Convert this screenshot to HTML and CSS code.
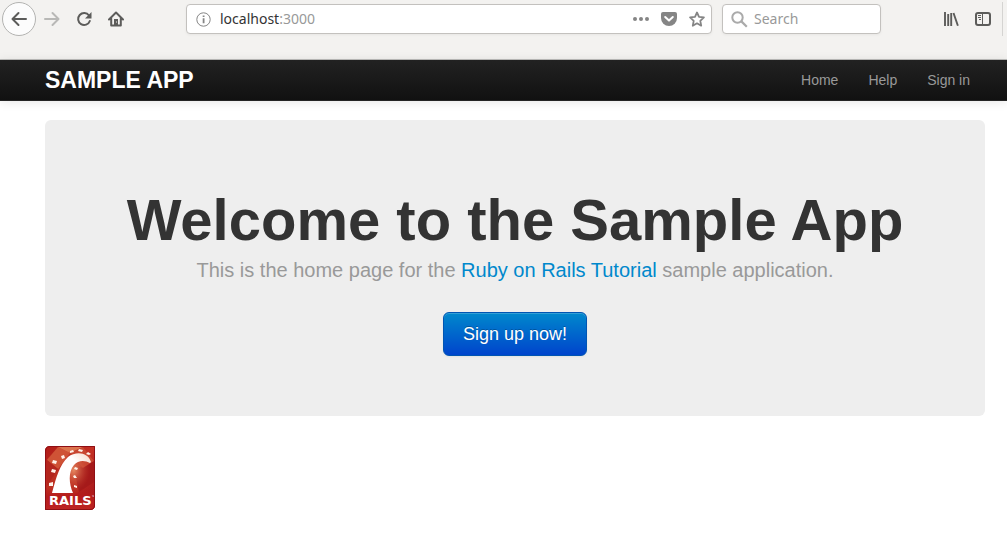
FILE: index.html
```html
<!DOCTYPE html>
<html lang="en">
<head>
<meta charset="utf-8">
<title>Sample App</title>
<link rel="stylesheet" href="styles.css">
</head>
<body>
<div class="toolbar">
  <div class="tools">
    <button class="tool back" aria-label="Back"><svg width="16" height="16" viewBox="0 0 16 16"><path d="M15 8H1.8M7.500 2L1.500 8l6 6" class="line"/></svg></button>
    <button class="tool forward" aria-label="Forward"><svg width="16" height="16" viewBox="0 0 16 16"><path d="M1 8h13.200M8.500 2l6 6-6 6" class="line"/></svg></button>
    <button class="tool" aria-label="Reload"><svg width="16" height="16" viewBox="0 0 16 16"><path d="M13 4.500A6 6 0 1 0 13.800 10" class="line"/><path d="M15.500 1v6.500H9z" fill="currentColor"/></svg></button>
    <button class="tool" aria-label="Home"><svg width="16" height="16" viewBox="0 0 16 16"><path d="M1 8.500l7-7 7 7M3.200 7.500v7h9.600v-7" class="line"/><path d="M6 8h4v6H6z" fill="currentColor"/><path d="M8 10.500h1v1H8z" fill="#f3f2f0"/></svg></button>
  </div>
  <div class="address field">
    <svg width="15" height="15" viewBox="0 0 15 15"><circle cx="7.500" cy="7.500" r="6.700" fill="none" stroke="#858585"/><path d="M6.700 3.400h1.800v1.700H6.700zM6.700 6.300h1.800v5H6.700z" fill="#858585"/></svg>
    <a class="url" href="#">localhost<span class="port">:3000</span></a>
    <button class="field-button" aria-label="Page actions"><svg width="16" height="16" viewBox="0 0 16 16" fill="currentColor"><circle cx="2" cy="8" r="2"/><circle cx="8" cy="8" r="2"/><circle cx="14" cy="8" r="2"/></svg></button>
    <button class="field-button" aria-label="Save to Pocket"><svg width="16" height="16" viewBox="0 0 16 16"><path d="M2 1h12q2 0 2 2v4a8 8 0 0 1-16 0V3q0-2 2-2z" fill="currentColor"/><path d="M4.200 6L8 9.600 11.800 6" fill="none" stroke="#fff" stroke-width="2" stroke-linecap="round" stroke-linejoin="round"/></svg></button>
    <button class="field-button" aria-label="Bookmark"><svg width="16" height="16" viewBox="0 0 16 16"><path d="M8 1.500l2 4.300 4.900.6-3.600 3.400.9 4.900L8 12.300l-4.200 2.400.9-4.900L1.100 6.400 6 5.800z" fill="none" stroke="currentColor" stroke-width="1.800" stroke-linejoin="round"/></svg></button>
  </div>
  <label class="search field">
    <svg width="17" height="17" viewBox="0 0 17 17"><circle cx="6.500" cy="6.500" r="5.200" fill="none" stroke="#aaa" stroke-width="2"/><path d="M10.400 10.400l5.400 5.400" stroke="#aaa" stroke-width="2.200"/></svg>
    <input class="search-input" type="text" placeholder="Search" aria-label="Search">
  </label>
  <div class="tools tools-end">
    <button class="tool" aria-label="Library"><svg width="16" height="16" viewBox="0 0 16 16"><path d="M2 1v14M5.200 3v12M8.200 2v13M10.500 2l4.400 12.700" fill="none" stroke="currentColor" stroke-width="1.900"/></svg></button>
    <button class="tool" aria-label="Sidebars"><svg width="16" height="16" viewBox="0 0 16 16" fill="none" stroke="currentColor"><rect x="1" y="2" width="14" height="12" rx="2" stroke-width="2"/><path d="M7.500 2v12M3 4.500h3M3 6.500h3M4 8.500h2"/></svg></button>
    <span class="divider"></span>
  </div>
</div>
<header class="navbar">
  <div class="container navbar-inner">
    <a class="brand" href="#">SAMPLE APP</a>
    <nav class="nav"><a href="#">Home</a><a href="#">Help</a><a href="#">Sign in</a></nav>
  </div>
</header>
<main class="container">
  <section class="hero">
    <h1>Welcome to the Sample App</h1>
    <h2>This is the home page for the <a href="#">Ruby on Rails Tutorial</a> sample application.</h2>
    <button class="signup">Sign up now!</button>
  </section>
  <a class="rails" href="#" aria-label="Rails">
    <svg width="50" height="64" viewBox="0 0 50 64">
      <defs>
        <linearGradient id="red" x2="1" y2="1"><stop offset="0" stop-color="#b01c18"/><stop offset=".5" stop-color="#c43024"/><stop offset="1" stop-color="#9c1018"/></linearGradient>
        <radialGradient id="glow"><stop offset="0" stop-color="#e68a62"/><stop offset="1" stop-color="#c43a28" stop-opacity="0"/></radialGradient>
        <linearGradient id="track" x1="1" x2="0" y2="1"><stop offset="0" stop-color="#f6d6c4"/><stop offset=".3" stop-color="#fff"/></linearGradient>
        <linearGradient id="base" x2="0" y2="1"><stop offset="0" stop-color="#b01a1a" stop-opacity="0"/><stop offset=".4" stop-color="#b51c1c"/><stop offset="1" stop-color="#bd2422"/></linearGradient>
      </defs>
      <path d="M5 0h45v59q0 5-5 5H0V5q0-5 5-5z" fill="url(#red)"/>
      <path d="M2 13L13 1h25l11 14v20L28 50 2 44z" fill="#bd3022"/>
      <path d="M13 1L2 14l11 9L25 7z" fill="#cf5336"/>
      <path d="M13 1l12 6L38 1z" fill="#dc744e"/>
      <path d="M2 14l11 9L2 40z" fill="#b3261e"/>
      <path d="M38 1l11 14-11 7-13-15z" fill="#c84630"/>
      <path d="M28 18l10 4 11-7v21L34 46z" fill="#a51a1a"/>
      <ellipse cx="29" cy="24" rx="16" ry="21" fill="url(#glow)"/>
      <path d="M0 42h50v17q0 5-5 5H0z" fill="url(#base)"/>
      <path d="M7 47C11 32 15 18 23 11c8-6 20-5 23 5l-1 1c-5-3-12-3-16 2-6 7-5 19-1 28z" fill="url(#track)"/>
      <g fill="#fff1e8"><path d="M16 10l3-1 1 3-3 1zM8 14l4 1-1 3-4-1zM7 23l4 1-1 3-4-1zM4 37l4-1v4l-4 0zM25 5l3-1 1 2-4 1zM34 3l4 1-1 2-4-1zM43 6l3 2-2 1-3-1zM35 12l2 1-1 1-2-1zM30 21l3 1-1 2-3-1zM28 30l2-1 2 3-3 0zM29 39l3 1v2l-3-1z"/></g>
      <text x="4" y="59" class="rails-name">RAILS<tspan class="trade" dy="-7">™</tspan></text>
      <path d="M5 .5h44.500V59q0 4.500-4.500 4.500H.5V5Q.5.5 5 .5z" fill="none" stroke="#8f0f14"/>
    </svg>
  </a>
</main>
</body>
</html>
```
FILE: styles.css
```css
* { box-sizing: border-box; }
body {
  margin: 0;
  background: #fff;
  color: #333;
  font-family: "Liberation Sans", Arial, sans-serif;
  font-size: 14px;
  line-height: 20px;
}
a { color: #08c; text-decoration: none; }
button { font: inherit; cursor: pointer; }
svg { display: block; flex: none; }

.toolbar {
  display: flex;
  align-items: flex-start;
  height: 60px;
  padding: 2px 4px 0 2px;
  background: #f3f2f0;
  border-bottom: 1px solid #bdbdbb;
}
.tools { display: flex; align-items: center; height: 34px; flex: none; }
.tool {
  display: flex;
  align-items: center;
  justify-content: center;
  width: 32px;
  height: 34px;
  padding: 0;
  border: 0;
  background: none;
  color: #5c5c5a;
}
.line { fill: none; stroke: currentColor; stroke-width: 2; stroke-linecap: round; stroke-linejoin: round; }
.back { width: 34px; border: 1px solid #b3b3b1; border-radius: 50%; background: #fcfcfc; }
.forward { color: #b8b8b6; }
.field {
  display: flex;
  align-items: center;
  height: 30px;
  margin-top: 2px;
  background: #fff;
  border: 1px solid #c3c1be;
  border-radius: 4px;
  box-shadow: 0 1px 3px rgba(0, 0, 0, .05);
  font-family: "Noto Sans", sans-serif;
}
.address { flex: 1; margin-left: 54px; padding: 0 6px 0 9px; gap: 12px; }
.url { flex: 1; margin-left: -3px; color: #333; }
.port { color: #999; }
.field-button { padding: 0; border: 0; background: none; color: #858585; }
.search { width: 159px; margin-left: 10px; padding: 0 8px; gap: 6px; }
.search-input { width: 100%; min-width: 0; padding: 0; border: 0; outline: 0; background: none; font: inherit; color: #333; }
.search-input::placeholder { color: #999; opacity: 1; }
.tools-end { margin-left: 54px; }
.divider { width: 1px; height: 34px; margin-left: 3px; background: #d5d4d2; }

.container { max-width: 1007px; margin: 0 auto; padding: 0 22px 0 45px; }
.navbar {
  background: linear-gradient(#222, #111);
  border-bottom: 1px solid #252525;
  box-shadow: 0 1px 10px rgba(0, 0, 0, .1);
}
.navbar-inner { display: flex; align-items: center; justify-content: space-between; height: 40px; }
.brand { color: #fff; font-size: 23px; font-weight: bold; }
.nav { display: flex; gap: 30px; padding-right: 15px; }
.nav a { color: #999; }

.hero {
  margin: 19px 0 30px;
  padding: 68px 20px 60px;
  background: #eee;
  border-radius: 6px;
  text-align: center;
}
.hero h1 { margin: 0; font-size: 58px; line-height: 64px; }
.hero h2 { margin: 0 0 24px; color: #999; font-size: 20px; font-weight: normal; line-height: 36px; }
.signup {
  display: block;
  height: 44px;
  margin: 0 auto;
  padding: 0 19px;
  border: 1px solid #0055b3;
  border-radius: 6px;
  background: linear-gradient(#08c, #04c);
  box-shadow: inset 0 1px 0 rgba(255, 255, 255, .2), 0 1px 2px rgba(0, 0, 0, .05);
  color: #fff;
  font-size: 18px;
  text-shadow: 0 -1px 0 rgba(0, 0, 0, .25);
}
.rails { display: inline-block; }
.rails-name { fill: #fff; font: bold 13px "DejaVu Sans", sans-serif; }
.trade { font: 4px "Liberation Sans", sans-serif; }
```
